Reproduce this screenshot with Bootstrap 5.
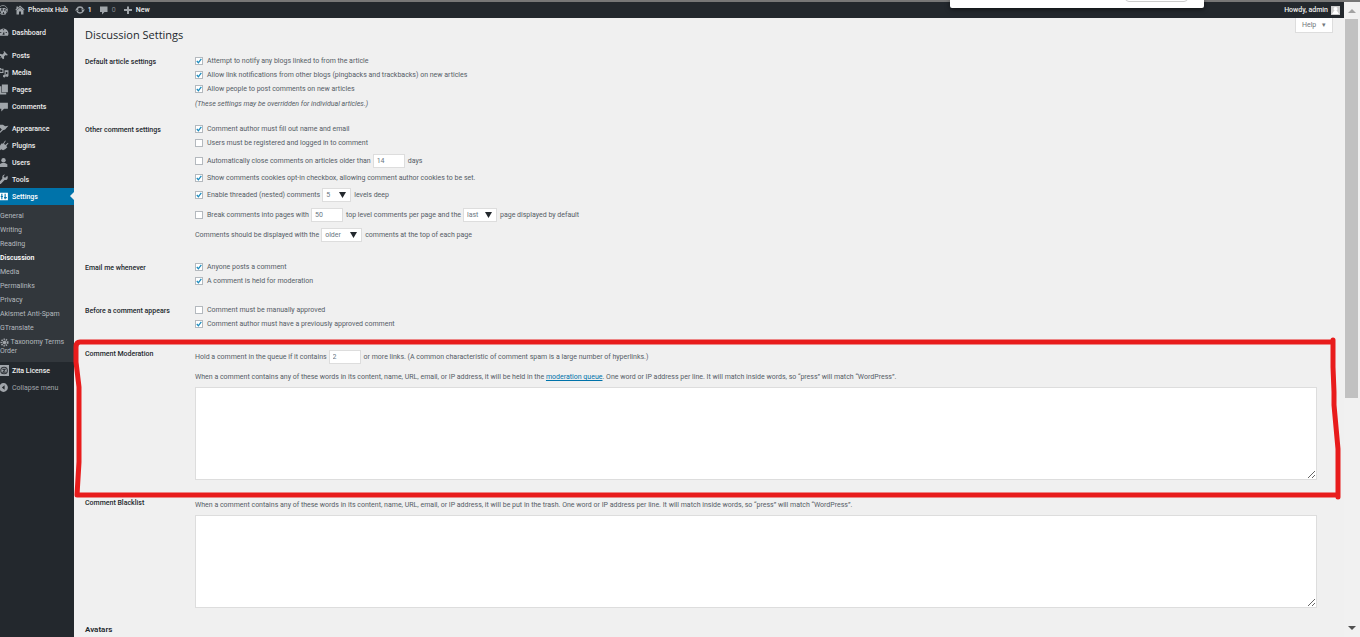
<!DOCTYPE html>
<html lang="en">
<head>
<meta charset="utf-8">
<meta name="viewport" content="width=device-width, initial-scale=1">
<title>Discussion Settings</title>
<link href="https://cdn.jsdelivr.net/npm/bootstrap@5.3.0/dist/css/bootstrap.min.css" rel="stylesheet">
<script src="https://cdn.jsdelivr.net/npm/bootstrap@5.3.0/dist/js/bootstrap.bundle.min.js"></script>
<style>
body { font: 7px/14px Roboto, "Open Sans", sans-serif; color: #555d66; background: #f0f0f0; }
a { color: inherit; text-decoration: none; }
input, select, button { font-family: inherit; }
.ico { width: 10px; height: 10px; fill: #a0a5aa; flex: none; }
.top-edge { height: 2px; background: #777; }
.adminbar { height: 16px; background: #23282d; color: #eee; font-weight: 500; line-height: 16px; }
.adminbar a { display: flex; align-items: center; gap: 3px; margin-left: 7px; }
.adminbar a:first-child { margin-left: -2px; }
.zero { color: #82878c; font-weight: 400; }
.popup { top: 0; right: 156px; width: 254px; height: 8px; background: #fff; border-radius: 0 0 2px 2px; box-shadow: 0 1px 5px #0009; z-index: 3; }
.popup button { position: absolute; right: 16px; top: -12px; width: 63px; height: 14px; background: #fff; border: 1px solid #ccc; border-radius: 4px; }
.sidebar { width: 74px; flex: none; background: #23282d; color: #eee; font-weight: 500; padding-top: 1px; }
.menu-group { padding-top: 5px; }
.menu-group + .menu-group { padding-top: 6px; }
.menu-group + .menu-group + .menu-group { padding-top: 5px; }
.menu-item { display: flex; align-items: center; height: 17px; gap: 3px; padding-left: 12px; position: relative; }
.menu-item .ico { margin-left: -14px; width: 11px; height: 11px; }
.menu-item.current { background: #0073aa; color: #fff; }
.menu-item.current .ico { fill: #fff; }
.menu-item.current::after { content: ""; position: absolute; right: 0; top: 4px; border: 4px solid transparent; border-left: 0; border-right-color: #f0f0f0; }
.submenu { background: #32373c; color: #b4b9be; padding: 4px 0 6px; font-weight: 400; }
.submenu a { display: block; }
.submenu .two-line { line-height: 9px; margin-top: 3px; }
.submenu .ico { width: 9px; height: 9px; }
.collapse-btn { border: 0; background: none; color: #a0a5aa; font-weight: 400; width: 100%; }
.content { padding: 6px 27px 0 11px; }
h1 { font: 400 11px/20px "Open Sans", sans-serif; color: #23282d; margin: 1px 0 9px; }
h2 { font-size: 8px; line-height: 14px; font-weight: 600; color: #23282d; margin: 0; }
.help { top: 0; right: 11px; width: 38px; height: 15px; background: #fff; border: 1px solid #ddd; border-top: 0; color: #72777c; line-height: 13px; padding: 0; }
.setting { margin-bottom: 15px; }
.setting.tight { margin-bottom: 12px; }
.setting-name { width: 110px; flex: none; padding-top: 1px; font-size: 7px; line-height: 14px; font-weight: 500; color: #23282d; margin: 0; }
.line { display: flex; align-items: center; min-height: 14px; }
.line.tall { min-height: 20px; }
.line.lead-in { min-height: 21px; }
.note { font-style: italic; line-height: 12px; margin: 2px 0 0; }
.tick { appearance: none; width: 8px; height: 8px; margin: 0 4px 0 0; border: 1px solid #b4b9be; background: #fff; flex: none; }
.tick:checked { background: #fff url("data:image/svg+xml,%3Csvg xmlns='http://www.w3.org/2000/svg' viewBox='0 0 6 6'%3E%3Cpath d='M.8 3l1.6 1.8L5.3.8' fill='none' stroke='%231e8cbe' stroke-width='1.3'/%3E%3C/svg%3E") center/6px no-repeat; }
.num, .pick { height: 14px; border: 1px solid #ddd; background: #fff; color: #6c7781; padding: 0 3px; border-radius: 0; font-size: 7px; line-height: 12px; margin: 0 3px 0 2px; appearance: none; }
.num { width: 32px; }
.pick { background: #fff url("data:image/svg+xml,%3Csvg xmlns='http://www.w3.org/2000/svg' viewBox='0 0 7 6'%3E%3Cpath d='M0 0h7L3.5 6z' fill='%2323282d'/%3E%3C/svg%3E") right 4px top 3px/7px 6px no-repeat; }
.pick-s { width: 29px; } .pick-m { width: 34px; } .pick-l { width: 41px; }
.words-label { display: block; padding-top: 3px; }
.words { display: block; width: 100%; height: 93px; border: 1px solid #ddd; background: #fff; resize: vertical; margin-top: 3px; }
.queue { color: #0073aa; text-decoration: underline; }
.marker { left: -11px; top: -9px; width: calc(100% + 36px); height: calc(100% + 29px); z-index: 2; pointer-events: none; overflow: visible; }
.marker path { fill: none; stroke: #e81c1c; stroke-width: 5; stroke-linejoin: round; stroke-linecap: round; vector-effect: non-scaling-stroke; }
.scrollbar { width: 16px; flex: none; background: #f1f1f1; padding: 0 2px 0 1px; }
.scrollbar svg { width: 13px; height: 17px; flex: none; }
.thumb { height: 63%; background: #c1c1c1; }
.shrinkable { min-width: 0; min-height: 0; }
</style>
</head>
<body>
<div class="vh-100 overflow-hidden d-flex flex-column position-relative">
  <div class="top-edge flex-shrink-0"></div>
  <div class="popup position-absolute"><button type="button" aria-label="Dismiss"></button></div>
  <div class="d-flex flex-grow-1 shrinkable">
    <div class="d-flex flex-column flex-grow-1 shrinkable">
      <nav class="adminbar d-flex align-items-center flex-shrink-0">
        <a href="#" aria-label="WordPress"><svg class="ico" viewBox="0 0 20 20"><circle cx="10" cy="10" r="9" fill="none" stroke="#a0a5aa" stroke-width="1.500"/><path d="M2 7h5M9 7h6M4 7l4 10 3-8M10 7l4 10 3-9" fill="none" stroke="#a0a5aa" stroke-width="2.500"/></svg></a>
        <a href="#"><svg class="ico" viewBox="0 0 20 20"><path d="M10 1l9 8-1 2-8-7-8 7-1-2 2-2V3h3v2zM3 11l7-6 7 6v8h-5v-6H8v6H3z"/></svg>Phoenix Hub</a>
        <a href="#"><svg class="ico" viewBox="0 0 20 20"><path d="M4 8a6.500 6.500 0 0 1 12 0M16 12a6.500 6.500 0 0 1-12 0" fill="none" stroke="#a0a5aa" stroke-width="3"/><path d="M0 11l4-5 4 5zM12 9l4 5 4-5z"/></svg>1</a>
        <a href="#" class="zero"><svg class="ico" viewBox="0 0 20 20"><path d="M2 3h15v11h-6l-5 5v-5H2z"/></svg>0</a>
        <a href="#"><svg class="ico" viewBox="0 0 20 20"><path d="M8 3h4v5h6v4h-6v6H8v-6H2V8h6z"/></svg>New</a>
        <a href="#" class="ms-auto me-1">Howdy, admin<svg width="9" height="9" viewBox="0 0 9 9"><path fill="#ccc" d="M0 0h9v9H0z"/><circle cx="4.500" cy="3" r="2" fill="#fff"/><path fill="#fff" d="M1 8l2-3h3l2 3z"/></svg></a>
      </nav>
      <div class="d-flex flex-grow-1 shrinkable">
        <nav class="sidebar">
          <div class="menu-group">
            <a class="menu-item" href="#"><svg class="ico" viewBox="0 0 20 20"><path fill-rule="evenodd" d="M2 16A9 9 0 1 1 18 16zM9 4v2h2V4zM4 9v2h2V9zM14 9v2h2V9zM8 14h4l-1-6z"/></svg>Dashboard</a>
          </div>
          <div class="menu-group">
            <a class="menu-item" href="#"><svg class="ico" viewBox="0 0 20 20"><path d="M11 2l7 7-2 1-2-1-3 3v4l-2 1-3-4-4 4 4-5-4-3 2-2 4 1 3-3-1-2z"/></svg>Posts</a>
            <a class="menu-item" href="#"><svg class="ico" viewBox="0 0 20 20"><path fill-rule="evenodd" d="M2 2h3l1 1h4v8H2zM4 5v4h4V5zM12 6h7v10a2.500 2.500 0 1 1-2-3V9h-3v8a2.500 2.500 0 1 1-2-3z"/></svg>Media</a>
            <a class="menu-item" href="#"><svg class="ico" viewBox="0 0 20 20"><path d="M7 1h11v14H7zM3 4h3v12h9v3H3z"/></svg>Pages</a>
            <a class="menu-item" href="#"><svg class="ico" viewBox="0 0 20 20"><path d="M3 3h15v11h-7l-5 5v-5H3z"/></svg>Comments</a>
          </div>
          <div class="menu-group">
            <a class="menu-item" href="#"><svg class="ico" viewBox="0 0 20 20"><path d="M3 3l6 0 4 3 6-1-6 7-4 1-6 6-1-2 5-5-4-4z"/></svg>Appearance</a>
            <a class="menu-item" href="#"><svg class="ico" viewBox="0 0 20 20"><path d="M13 1l1 1-3 5 2 2 5-4 1 1-4 5 2 2-4 4c-3 2-5 2-7 0l-4 3-1-1 3-4C2 12 4 9 7 6l2 1z"/></svg>Plugins</a>
            <a class="menu-item" href="#"><svg class="ico" viewBox="0 0 20 20"><circle cx="10" cy="6" r="4"/><path d="M3 18v-5l4-2h6l4 2v5z"/></svg>Users</a>
            <a class="menu-item" href="#"><svg class="ico" viewBox="0 0 20 20"><path d="M17 3l-4 4-2-1-1-2 3-3c-4 0-6 3-5 7l-6 7 0 3h3l7-7c5 1 7-4 5-8z"/></svg>Tools</a>
            <a class="menu-item current" href="#"><svg class="ico" viewBox="0 0 20 20"><path fill-rule="evenodd" d="M3 3h15v14H3zM6 5v4H5v2h1v4h2v-4h1V9H8V5zM12 5v6h-1v2h1v2h2v-2h2v-2h-2V5z"/></svg>Settings</a>
          </div>
          <div class="submenu">
            <a href="#">General</a><a href="#">Writing</a><a href="#">Reading</a><a href="#" class="text-white fw-semibold">Discussion</a><a href="#">Media</a><a href="#">Permalinks</a><a href="#">Privacy</a><a href="#">Akismet Anti-Spam</a><a href="#">GTranslate</a>
            <a href="#" class="two-line"><svg class="ico" viewBox="0 0 20 20"><circle cx="10" cy="10" r="7" fill="none" stroke="#a0a5aa" stroke-width="4" stroke-dasharray="3 2"/><circle cx="10" cy="10" r="4"/></svg> Taxonomy Terms Order</a>
          </div>
          <a class="menu-item" href="#"><svg class="ico" viewBox="0 0 20 20"><path d="M0 0h20v20H0z"/><g fill="none" stroke="#32373c" stroke-width="2"><circle cx="11" cy="10" r="6"/><path d="M8 8h5l-4 5h5"/></g></svg>Zita License</a>
          <button type="button" class="menu-item collapse-btn"><svg class="ico" viewBox="0 0 20 20"><path fill-rule="evenodd" d="M10 2a8 8 0 1 1 0 16 8 8 0 0 1 0-16zM12 6l-5 4 5 4z"/></svg>Collapse menu</button>
        </nav>
        <main class="content flex-grow-1 position-relative shrinkable">
          <button type="button" class="help position-absolute">Help <span class="ms-1">▾</span></button>
          <h1>Discussion Settings</h1>
          <section class="setting tight d-flex">
            <h3 class="setting-name">Default article settings</h3>
            <div class="flex-grow-1">
              <label class="line"><input class="tick" type="checkbox" checked>Attempt to notify any blogs linked to from the article</label>
              <label class="line"><input class="tick" type="checkbox" checked>Allow link notifications from other blogs (pingbacks and trackbacks) on new articles</label>
              <label class="line"><input class="tick" type="checkbox" checked>Allow people to post comments on new articles</label>
              <p class="note">(These settings may be overridden for individual articles.)</p>
            </div>
          </section>
          <section class="setting d-flex">
            <h3 class="setting-name">Other comment settings</h3>
            <div class="flex-grow-1">
              <label class="line"><input class="tick" type="checkbox" checked>Comment author must fill out name and email</label>
              <label class="line"><input class="tick" type="checkbox">Users must be registered and logged in to comment</label>
              <div class="line lead-in"><input class="tick" type="checkbox" id="close"><label for="close">Automatically close comments on articles older than</label><input class="num" value="14" aria-label="Days">days</div>
              <label class="line"><input class="tick" type="checkbox" checked>Show comments cookies opt-in checkbox, allowing comment author cookies to be set.</label>
              <div class="line tall"><input class="tick" type="checkbox" id="thread" checked><label for="thread">Enable threaded (nested) comments</label><select class="pick pick-s" aria-label="Levels"><option>5</option></select>levels deep</div>
              <div class="line tall"><input class="tick" type="checkbox" id="paged"><label for="paged">Break comments into pages with</label><input class="num" value="50" aria-label="Comments per page"><span>top level comments per page and the</span><select class="pick pick-m" aria-label="Default page"><option>last</option></select>page displayed by default</div>
              <div class="line tall"><label for="order">Comments should be displayed with the</label><select class="pick pick-l" id="order"><option>older</option></select>comments at the top of each page</div>
            </div>
          </section>
          <section class="setting d-flex">
            <h3 class="setting-name">Email me whenever</h3>
            <div class="flex-grow-1">
              <label class="line"><input class="tick" type="checkbox" checked>Anyone posts a comment</label>
              <label class="line"><input class="tick" type="checkbox" checked>A comment is held for moderation</label>
            </div>
          </section>
          <section class="setting d-flex">
            <h3 class="setting-name">Before a comment appears</h3>
            <div class="flex-grow-1">
              <label class="line"><input class="tick" type="checkbox">Comment must be manually approved</label>
              <label class="line"><input class="tick" type="checkbox" checked>Comment author must have a previously approved comment</label>
            </div>
          </section>
          <section class="setting d-flex position-relative">
            <h3 class="setting-name">Comment Moderation</h3>
            <div class="flex-grow-1">
              <div class="line lead-in"><label for="links">Hold a comment in the queue if it contains</label><input class="num" id="links" value="2">or more links. (A common characteristic of comment spam is a large number of hyperlinks.)</div>
              <label for="mod" class="words-label">When a comment contains any of these words in its content, name, URL, email, or IP address, it will be held in the <a href="#" class="queue">moderation queue</a>. One word or IP address per line. It will match inside words, so “press” will match “WordPress”.</label>
              <textarea class="words" id="mod"></textarea>
            </div>
            <svg class="marker position-absolute" viewBox="0 0 1268 163" preserveAspectRatio="none"><path d="M2 10Q2 5 6 5H1259V3V30L1260 55V68L1264 112V160 158H3L5 125V50L2 25Z"/></svg>
          </section>
          <section class="setting d-flex">
            <h3 class="setting-name">Comment Blacklist</h3>
            <div class="flex-grow-1">
              <label for="black" class="words-label">When a comment contains any of these words in its content, name, URL, email, or IP address, it will be put in the trash. One word or IP address per line. It will match inside words, so “press” will match “WordPress”.</label>
              <textarea class="words" id="black"></textarea>
            </div>
          </section>
          <h2>Avatars</h2>
        </main>
      </div>
    </div>
    <div class="scrollbar d-flex flex-column" aria-hidden="true">
      <svg viewBox="0 0 13 17"><path d="M3 11h8L7 7z" fill="#a3a3a3"/></svg>
      <div class="flex-grow-1 shrinkable"><div class="thumb"></div></div>
      <svg viewBox="0 0 13 17"><path d="M3 6h8l-4 4z" fill="#505050"/></svg>
    </div>
  </div>
</div>
</body>
</html>
